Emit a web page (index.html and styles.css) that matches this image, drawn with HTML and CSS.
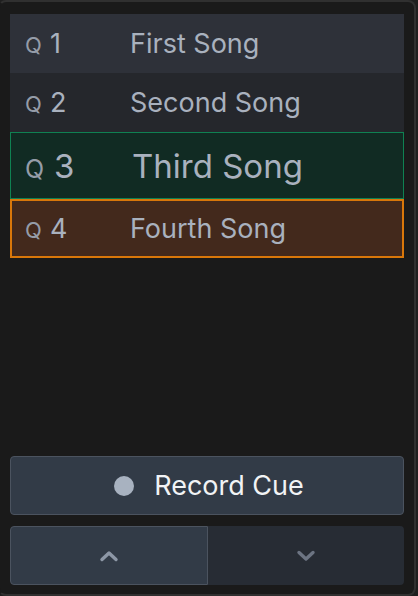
FILE: index.html
```html
<!DOCTYPE html>
<html lang="en">
<head>
  <meta charset="UTF-8" />
  <meta name="viewport" content="width=device-width, initial-scale=1.0"/>
  <title>Cue List</title>
  <link rel="stylesheet" href="styles.css">
</head>
<body>
  <div class="panel">
    <ul class="cue-list">
      <li class="cue cue-odd">
        <span class="cue-label"><span class="cue-q">Q</span>1</span>
        <span class="cue-name">First Song</span>
      </li>
      <li class="cue">
        <span class="cue-label"><span class="cue-q">Q</span>2</span>
        <span class="cue-name">Second Song</span>
      </li>
      <li class="cue cue-active">
        <span class="cue-label"><span class="cue-q">Q</span>3</span>
        <span class="cue-name">Third Song</span>
      </li>
      <li class="cue cue-next">
        <span class="cue-label"><span class="cue-q">Q</span>4</span>
        <span class="cue-name">Fourth Song</span>
      </li>
    </ul>

    <div class="controls">
      <button class="btn btn-record">
        <span class="rec-dot"></span>
        Record Cue
      </button>
      <div class="nav">
        <button class="btn btn-nav btn-up" aria-label="Previous cue">
          <svg width="20" height="12" viewBox="0 0 20 12">
            <path d="M3 9.5 L10 3 L17 9.5" fill="none" stroke="currentColor" stroke-width="3.4" stroke-linecap="round" stroke-linejoin="round"/>
          </svg>
        </button>
        <button class="btn btn-nav btn-down" aria-label="Next cue">
          <svg width="20" height="12" viewBox="0 0 20 12">
            <path d="M3 2.5 L10 9 L17 2.5" fill="none" stroke="currentColor" stroke-width="3.4" stroke-linecap="round" stroke-linejoin="round"/>
          </svg>
        </button>
      </div>
    </div>
  </div>
</body>
</html>
```

FILE: styles.css
```css
html, body {
  margin: 0;
  height: 100%;
}

body {
  font-family: Inter, "Noto Sans", sans-serif;
  background: #1f1f1f;
}

.panel {
  box-sizing: border-box;
  width: 418px;
  height: 596px;
  margin-left: -2px;
  padding: 12px 10px 9px 10px;
  border: 2px solid #303030;
  border-left-color: #1a1a1a;
  border-radius: 8px;
  background: #1a1a1a;
  display: flex;
  flex-direction: column;
  justify-content: space-between;
}

.cue-list {
  list-style: none;
  margin: 0;
  padding: 0;
}

.cue {
  display: flex;
  align-items: center;
  height: 59px;
  padding-left: 15px;
  box-sizing: border-box;
  background: #25272c;
  color: #a9b1be;
  font-size: 27px;
}

.cue-odd {
  background: #2e3139;
}

.cue-label {
  width: 105px;
}

.cue-q {
  display: inline-block;
  width: 25px;
  font-size: 22px;
  color: #959ca8;
}

.cue-active {
  height: 67px;
  border: 1px solid #0f8152;
  background: #112b23;
  font-size: 33px;
  padding-left: 14px;
}

.cue-active .cue-q {
  font-size: 25px;
  width: 29px;
}

.cue-active .cue-label {
  width: 107px;
}

.cue-next {
  height: 59px;
  border: 2px solid #d9770a;
  background: #43291c;
  padding-left: 13px;
}

.controls {
  display: flex;
  flex-direction: column;
  gap: 11px;
}

.btn {
  font-family: inherit;
  box-sizing: border-box;
  border: 1px solid #4b535f;
  background: #323b47;
  cursor: pointer;
}

.btn-record {
  height: 59px;
  border-radius: 4px;
  display: flex;
  align-items: center;
  justify-content: center;
  gap: 20px;
  font-size: 27px;
  color: #f1f3f5;
  padding-right: 2px;
}

.rec-dot {
  width: 20px;
  height: 20px;
  border-radius: 50%;
  background: #a8b2c0;
}

.nav {
  display: flex;
  height: 59px;
}

.btn-nav {
  flex: 1;
  display: flex;
  align-items: center;
  justify-content: center;
}

.btn-up {
  border-radius: 4px 0 0 4px;
  color: #8d97a6;
}

.btn-down {
  border: none;
  border-radius: 0 4px 4px 0;
  background: #272c34;
  color: #6c7482;
}
```
